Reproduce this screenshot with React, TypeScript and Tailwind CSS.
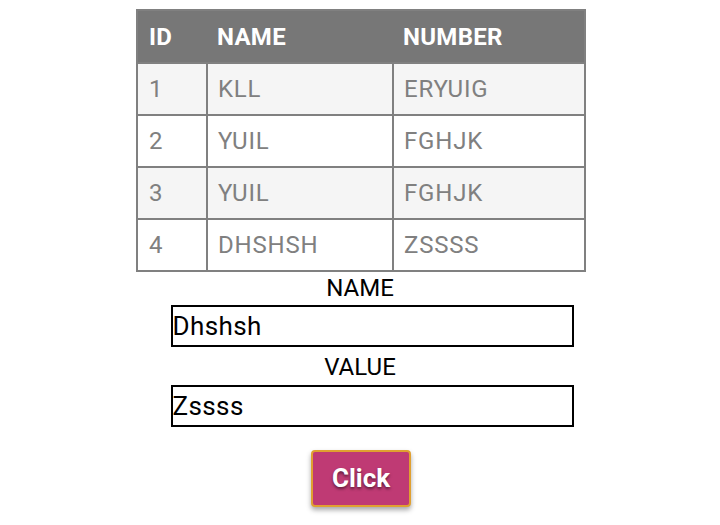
import React from "react";

const rows = [
  { id: 1, name: "KLL", number: "ERYUIG" },
  { id: 2, name: "YUIL", number: "FGHJK" },
  { id: 3, name: "YUIL", number: "FGHJK" },
  { id: 4, name: "DHSHSH", number: "ZSSSS" },
];

export default function App() {
  return (
    <div
      className="flex w-[720px] h-[525px] flex-col items-center bg-white pt-[9px]"
      style={{ fontFamily: "Roboto, 'Liberation Sans', sans-serif" }}
    >
      <table className="ml-[2px] w-[450px] border-collapse border-2 border-[#808080] text-[24px]">
        <thead>
          <tr className="h-[53px] bg-[#777777] text-left text-white">
            <th className="w-[70px] pl-[11px] font-bold tracking-[0.3px]">ID</th>
            <th className="w-[186px] pl-[10px] font-bold tracking-[0.3px]">NAME</th>
            <th className="pl-[10px] font-bold tracking-[0.3px]">NUMBER</th>
          </tr>
        </thead>
        <tbody>
          {rows.map((r, i) => (
            <tr
              key={r.id}
              className={`h-[52px] font-normal tracking-[0.8px] text-[#808080] ${i % 2 === 0 ? "bg-[#f5f5f5]" : "bg-white"}`}
            >
              <td className="border-2 border-[#808080] pl-[11px]">{r.id}</td>
              <td className="border-2 border-[#808080] pl-[10px]">{r.name}</td>
              <td className="border-2 border-[#808080] pl-[10px]">{r.number}</td>
            </tr>
          ))}
        </tbody>
      </table>

      <div className="mt-[-1px] text-[24px] leading-[34px] text-black">NAME</div>
      <div className="ml-6 flex h-[42px] w-[403px] items-center border-2 border-black px-0 text-[26px] tracking-[0.4px] text-black">
        Dhshsh
      </div>
      <div className="mt-[3px] text-[24px] leading-[35px] text-black">VALUE</div>
      <div className="ml-6 flex h-[42px] w-[403px] items-center border-2 border-black px-0 text-[26px] tracking-[0.4px] text-black">
        Zssss
      </div>

      <button className="ml-[2px] mt-[23px] flex h-[57px] w-[100px] items-center justify-center rounded-[4px] border-2 border-[#e0a030] bg-[#bf3a74] text-[26px] font-bold text-white shadow-[0_3px_5px_rgba(0,0,0,0.35)] [text-shadow:0_2px_3px_rgba(0,0,0,0.5)]">
        Click
      </button>
    </div>
  );
}
